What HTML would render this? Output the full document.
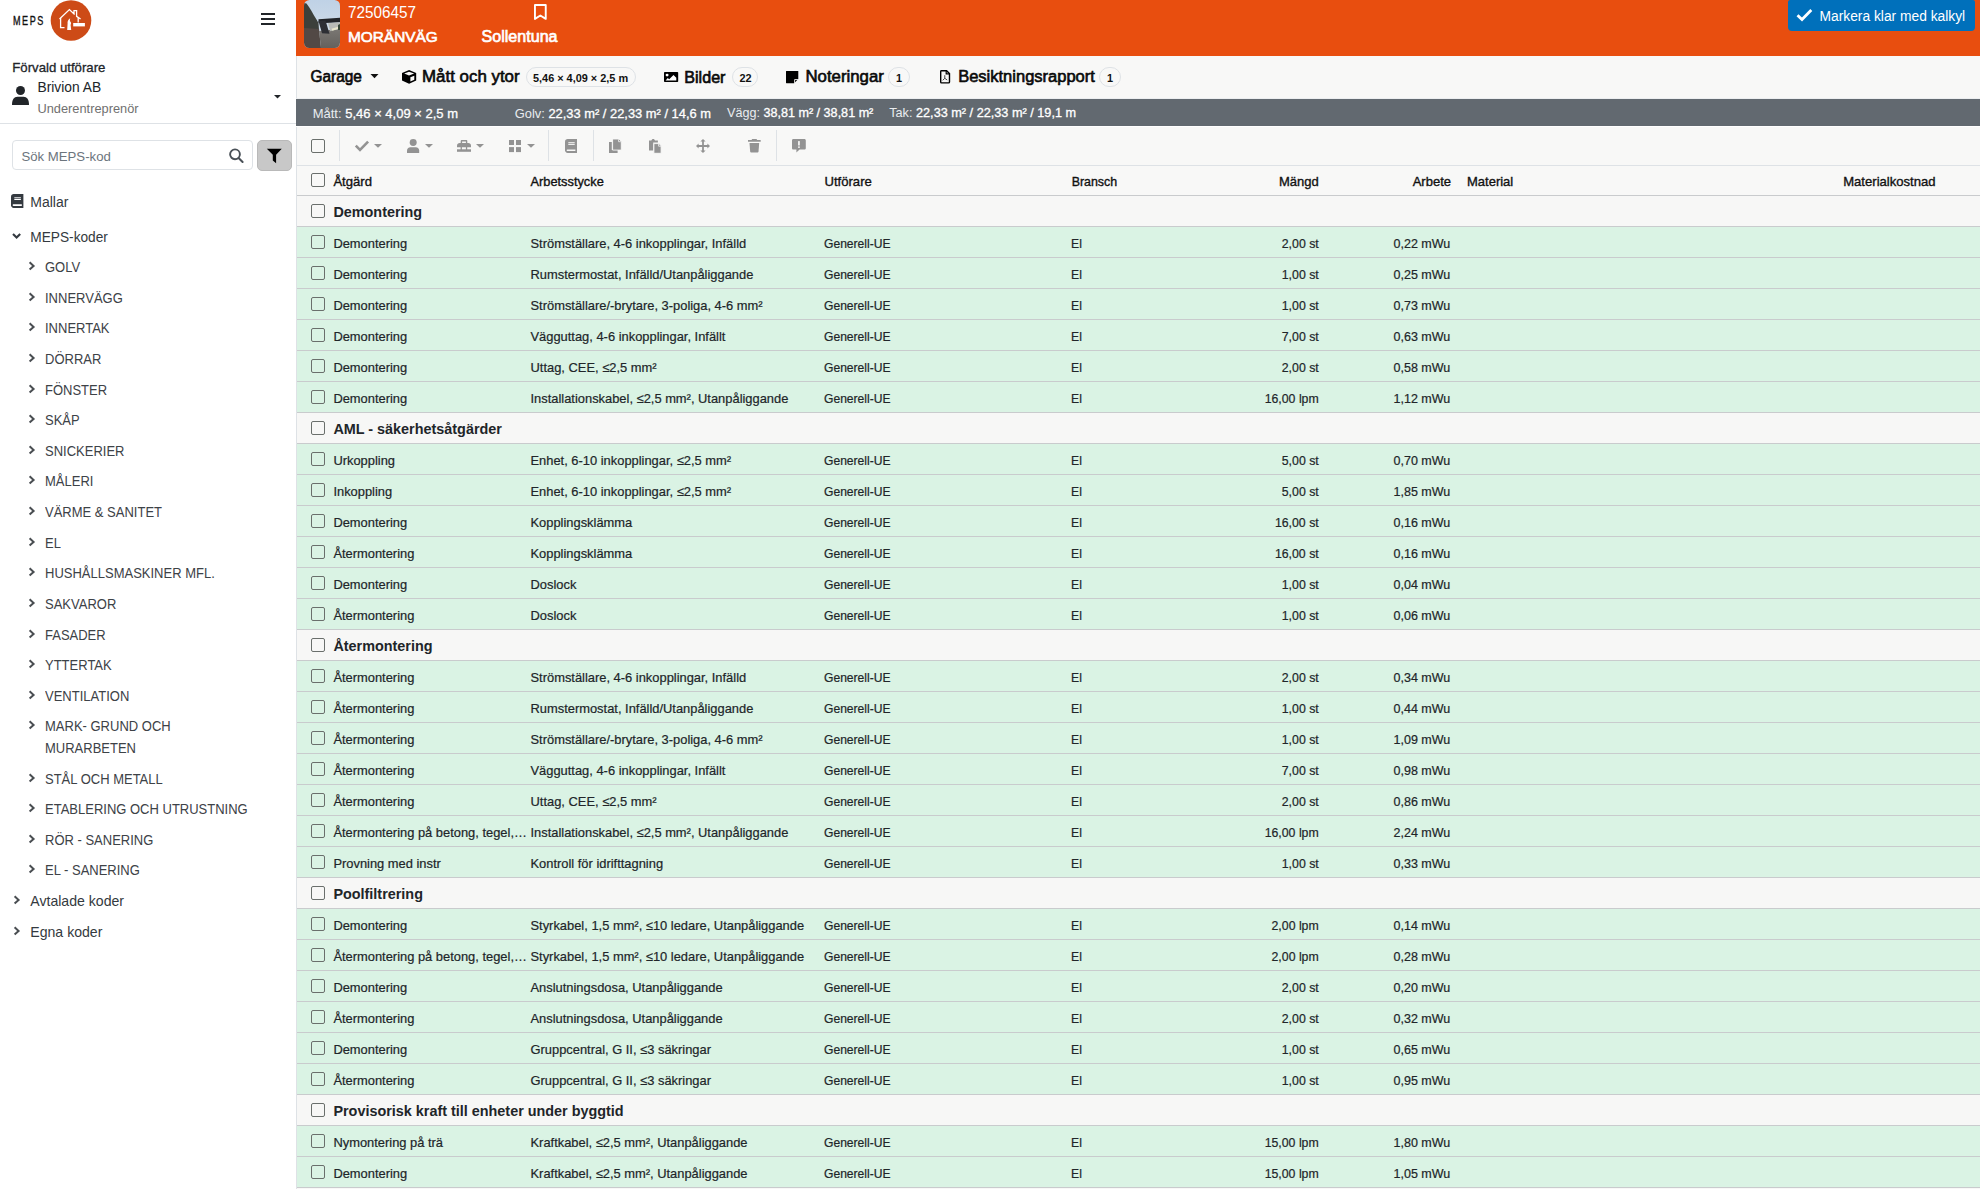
<!DOCTYPE html>
<html><head><meta charset="utf-8"><title>MEPS</title>
<style>
html,body{margin:0;padding:0;}
body{width:1980px;height:1189px;overflow:hidden;position:relative;background:#fff;font-family:"Liberation Sans", sans-serif;}
.t{position:absolute;white-space:nowrap;}
.r{position:absolute;}
svg.r{overflow:visible;}
</style></head><body>
<div class="r" style="left:0px;top:0px;width:296px;height:1189px;background:#fff;"></div>
<div class="t " style="left:12.90px;top:12.83px;font-size:12.6px;line-height:16px;color:#111;letter-spacing:2.1px;-webkit-text-stroke:0.35px #111;transform:scaleX(0.72);transform-origin:0 0;">MEPS</div>
<svg class="r" style="left:50px;top:0px;" width="42" height="42" viewBox="0 0 42 42"><circle cx="21" cy="20.5" r="20.3" fill="#CD4B17"/>
<path d="M9.5 19 L19.4 9.6 L24.6 14.4 M24 13.8 V10.6 H26.6 V16.3 L30.6 19" fill="none" stroke="#fff" stroke-width="1.3"/>
<path d="M10.6 18 V27.6 H14.5" fill="none" stroke="#fff" stroke-width="1.3"/>
<path d="M28.2 17.5 V22.6" fill="none" stroke="#fff" stroke-width="1.3"/>
<path d="M17.2 30 L17.6 23.5 C17.2 21.5 18.3 19.3 20.2 18.2 C19.6 20 19.8 21.2 20.6 22 L21.1 23 L20.6 25 L21.2 30 Z" fill="#fff"/>
<rect x="23.2" y="23" width="11.7" height="3.4" fill="#fff"/></svg>
<div class="r" style="left:261px;top:13px;width:14px;height:2px;background:#212529;"></div>
<div class="r" style="left:261px;top:18.3px;width:14px;height:2px;background:#212529;"></div>
<div class="r" style="left:261px;top:23px;width:14px;height:2px;background:#212529;"></div>
<div class="t " style="left:12.30px;top:58.72px;font-size:13.2px;line-height:17px;color:#212529;-webkit-text-stroke:0.3px #212529;">Förvald utförare</div>
<svg class="r" style="left:12px;top:85px;" width="17" height="21" viewBox="0 0 17 21"><circle cx="8.5" cy="5.5" r="4.5" fill="#212529"/><path d="M0 20 C0 14.5 2 11.8 5.5 11.8 H11.5 C15 11.8 17 14.5 17 20 Z" fill="#212529"/></svg>
<div class="t " style="left:37.50px;top:78.81px;font-size:13.8px;line-height:18px;color:#212529;">Brivion AB</div>
<div class="t " style="left:37.50px;top:100.06px;font-size:12.8px;line-height:17px;color:#707070;">Underentreprenör</div>
<svg class="r" style="left:274px;top:94.7px;" width="7" height="4" viewBox="0 0 7 4"><path d="M0 0 H7 L3.5 3.5 Z" fill="#212529"/></svg>
<div class="r" style="left:0px;top:123px;width:296px;height:1px;background:#dee2e6;"></div>
<div class="r" style="left:12px;top:140px;width:241px;height:30px;background:#fff;border:1px solid #dee2e6;border-radius:4px;box-sizing:border-box;"></div>
<div class="t " style="left:21.40px;top:148.12px;font-size:13.2px;line-height:17px;color:#6c757d;">Sök MEPS-kod</div>
<svg class="r" style="left:228px;top:147px;" width="17" height="17" viewBox="0 0 17 17"><circle cx="7" cy="7.3" r="4.9" fill="none" stroke="#495057" stroke-width="1.9"/><path d="M10.6 10.9 L14.6 14.9" stroke="#495057" stroke-width="2.1" stroke-linecap="round"/></svg>
<div class="r" style="left:257px;top:140px;width:35px;height:31px;background:#c8c8c8;border:1px solid #b9b9b9;border-radius:5px;box-sizing:border-box;"></div>
<svg class="r" style="left:266px;top:148px;" width="17" height="16" viewBox="0 0 17 16"><path d="M0.8 0.7 H15.8 L10.1 6.8 V15.2 L6.8 12.6 V6.8 Z" fill="#000"/></svg>
<svg class="r" style="left:10.8px;top:194px;" width="12.4" height="13.9" viewBox="0 0 12.4 13.9"><path d="M2.6 0 H12.4 V13.9 H2.6 C1.2 13.9 0 12.7 0 11.3 V2.6 C0 1.2 1.2 0 2.6 0 Z" fill="#343a40"/><rect x="3.3" y="3.3" width="6.6" height="1" fill="#fff"/><rect x="3.3" y="5" width="6.6" height="1" fill="#fff"/><path d="M2.4 10.2 H10.8 V12 H2.4 C1.9 12 1.7 11.8 1.7 11.1 C1.7 10.4 1.9 10.2 2.4 10.2 Z" fill="#fff"/></svg>
<div class="t " style="left:30.30px;top:193.14px;font-size:14px;line-height:18px;color:#343a40;">Mallar</div>
<svg class="r" style="left:12px;top:233px;" width="10" height="7" viewBox="0 0 10 7"><path d="M1 1 L4.6 4.6 L8.2 1" fill="none" stroke="#343a40" stroke-width="2.1"/></svg>
<div class="t " style="left:30.30px;top:228.55px;font-size:13.7px;line-height:18px;color:#343a40;transform:scaleY(1.06);transform-origin:0 13.75px;">MEPS-koder</div>
<svg class="r" style="left:28px;top:261px;" width="8" height="10" viewBox="0 0 8 10"><path d="M1.6 1.2 L5.6 4.9 L1.6 8.6" fill="none" stroke="#4a4e52" stroke-width="2"/></svg>
<div class="t " style="left:45.00px;top:258.59px;font-size:13px;line-height:17px;color:#3d4247;transform:scaleY(1.1);transform-origin:0 13.01px;">GOLV</div>
<svg class="r" style="left:28px;top:292px;" width="8" height="10" viewBox="0 0 8 10"><path d="M1.6 1.2 L5.6 4.9 L1.6 8.6" fill="none" stroke="#4a4e52" stroke-width="2"/></svg>
<div class="t " style="left:45.00px;top:289.59px;font-size:13px;line-height:17px;color:#3d4247;transform:scaleY(1.1);transform-origin:0 13.01px;">INNERVÄGG</div>
<svg class="r" style="left:28px;top:322px;" width="8" height="10" viewBox="0 0 8 10"><path d="M1.6 1.2 L5.6 4.9 L1.6 8.6" fill="none" stroke="#4a4e52" stroke-width="2"/></svg>
<div class="t " style="left:45.00px;top:319.59px;font-size:13px;line-height:17px;color:#3d4247;transform:scaleY(1.1);transform-origin:0 13.01px;">INNERTAK</div>
<svg class="r" style="left:28px;top:353px;" width="8" height="10" viewBox="0 0 8 10"><path d="M1.6 1.2 L5.6 4.9 L1.6 8.6" fill="none" stroke="#4a4e52" stroke-width="2"/></svg>
<div class="t " style="left:45.00px;top:350.59px;font-size:13px;line-height:17px;color:#3d4247;transform:scaleY(1.1);transform-origin:0 13.01px;">DÖRRAR</div>
<svg class="r" style="left:28px;top:384px;" width="8" height="10" viewBox="0 0 8 10"><path d="M1.6 1.2 L5.6 4.9 L1.6 8.6" fill="none" stroke="#4a4e52" stroke-width="2"/></svg>
<div class="t " style="left:45.00px;top:381.59px;font-size:13px;line-height:17px;color:#3d4247;transform:scaleY(1.1);transform-origin:0 13.01px;">FÖNSTER</div>
<svg class="r" style="left:28px;top:414px;" width="8" height="10" viewBox="0 0 8 10"><path d="M1.6 1.2 L5.6 4.9 L1.6 8.6" fill="none" stroke="#4a4e52" stroke-width="2"/></svg>
<div class="t " style="left:45.00px;top:411.59px;font-size:13px;line-height:17px;color:#3d4247;transform:scaleY(1.1);transform-origin:0 13.01px;">SKÅP</div>
<svg class="r" style="left:28px;top:445px;" width="8" height="10" viewBox="0 0 8 10"><path d="M1.6 1.2 L5.6 4.9 L1.6 8.6" fill="none" stroke="#4a4e52" stroke-width="2"/></svg>
<div class="t " style="left:45.00px;top:442.59px;font-size:13px;line-height:17px;color:#3d4247;transform:scaleY(1.1);transform-origin:0 13.01px;">SNICKERIER</div>
<svg class="r" style="left:28px;top:475px;" width="8" height="10" viewBox="0 0 8 10"><path d="M1.6 1.2 L5.6 4.9 L1.6 8.6" fill="none" stroke="#4a4e52" stroke-width="2"/></svg>
<div class="t " style="left:45.00px;top:472.59px;font-size:13px;line-height:17px;color:#3d4247;transform:scaleY(1.1);transform-origin:0 13.01px;">MÅLERI</div>
<svg class="r" style="left:28px;top:506px;" width="8" height="10" viewBox="0 0 8 10"><path d="M1.6 1.2 L5.6 4.9 L1.6 8.6" fill="none" stroke="#4a4e52" stroke-width="2"/></svg>
<div class="t " style="left:45.00px;top:503.59px;font-size:13px;line-height:17px;color:#3d4247;transform:scaleY(1.1);transform-origin:0 13.01px;">VÄRME &amp; SANITET</div>
<svg class="r" style="left:28px;top:537px;" width="8" height="10" viewBox="0 0 8 10"><path d="M1.6 1.2 L5.6 4.9 L1.6 8.6" fill="none" stroke="#4a4e52" stroke-width="2"/></svg>
<div class="t " style="left:45.00px;top:534.59px;font-size:13px;line-height:17px;color:#3d4247;transform:scaleY(1.1);transform-origin:0 13.01px;">EL</div>
<svg class="r" style="left:28px;top:567px;" width="8" height="10" viewBox="0 0 8 10"><path d="M1.6 1.2 L5.6 4.9 L1.6 8.6" fill="none" stroke="#4a4e52" stroke-width="2"/></svg>
<div class="t " style="left:45.00px;top:564.59px;font-size:13px;line-height:17px;color:#3d4247;transform:scaleY(1.1);transform-origin:0 13.01px;">HUSHÅLLSMASKINER MFL.</div>
<svg class="r" style="left:28px;top:598px;" width="8" height="10" viewBox="0 0 8 10"><path d="M1.6 1.2 L5.6 4.9 L1.6 8.6" fill="none" stroke="#4a4e52" stroke-width="2"/></svg>
<div class="t " style="left:45.00px;top:595.59px;font-size:13px;line-height:17px;color:#3d4247;transform:scaleY(1.1);transform-origin:0 13.01px;">SAKVAROR</div>
<svg class="r" style="left:28px;top:629px;" width="8" height="10" viewBox="0 0 8 10"><path d="M1.6 1.2 L5.6 4.9 L1.6 8.6" fill="none" stroke="#4a4e52" stroke-width="2"/></svg>
<div class="t " style="left:45.00px;top:626.59px;font-size:13px;line-height:17px;color:#3d4247;transform:scaleY(1.1);transform-origin:0 13.01px;">FASADER</div>
<svg class="r" style="left:28px;top:659px;" width="8" height="10" viewBox="0 0 8 10"><path d="M1.6 1.2 L5.6 4.9 L1.6 8.6" fill="none" stroke="#4a4e52" stroke-width="2"/></svg>
<div class="t " style="left:45.00px;top:656.59px;font-size:13px;line-height:17px;color:#3d4247;transform:scaleY(1.1);transform-origin:0 13.01px;">YTTERTAK</div>
<svg class="r" style="left:28px;top:690px;" width="8" height="10" viewBox="0 0 8 10"><path d="M1.6 1.2 L5.6 4.9 L1.6 8.6" fill="none" stroke="#4a4e52" stroke-width="2"/></svg>
<div class="t " style="left:45.00px;top:687.59px;font-size:13px;line-height:17px;color:#3d4247;transform:scaleY(1.1);transform-origin:0 13.01px;">VENTILATION</div>
<svg class="r" style="left:28px;top:720px;" width="8" height="10" viewBox="0 0 8 10"><path d="M1.6 1.2 L5.6 4.9 L1.6 8.6" fill="none" stroke="#4a4e52" stroke-width="2"/></svg>
<div class="t " style="left:45.00px;top:717.59px;font-size:13px;line-height:17px;color:#3d4247;transform:scaleY(1.1);transform-origin:0 13.01px;">MARK- GRUND OCH</div>
<div class="t " style="left:45.00px;top:739.59px;font-size:13px;line-height:17px;color:#3d4247;transform:scaleY(1.1);transform-origin:0 13.01px;">MURARBETEN</div>
<svg class="r" style="left:28px;top:773px;" width="8" height="10" viewBox="0 0 8 10"><path d="M1.6 1.2 L5.6 4.9 L1.6 8.6" fill="none" stroke="#4a4e52" stroke-width="2"/></svg>
<div class="t " style="left:45.00px;top:770.59px;font-size:13px;line-height:17px;color:#3d4247;transform:scaleY(1.1);transform-origin:0 13.01px;">STÅL OCH METALL</div>
<svg class="r" style="left:28px;top:803px;" width="8" height="10" viewBox="0 0 8 10"><path d="M1.6 1.2 L5.6 4.9 L1.6 8.6" fill="none" stroke="#4a4e52" stroke-width="2"/></svg>
<div class="t " style="left:45.00px;top:800.59px;font-size:13px;line-height:17px;color:#3d4247;transform:scaleY(1.1);transform-origin:0 13.01px;">ETABLERING OCH UTRUSTNING</div>
<svg class="r" style="left:28px;top:834px;" width="8" height="10" viewBox="0 0 8 10"><path d="M1.6 1.2 L5.6 4.9 L1.6 8.6" fill="none" stroke="#4a4e52" stroke-width="2"/></svg>
<div class="t " style="left:45.00px;top:831.59px;font-size:13px;line-height:17px;color:#3d4247;transform:scaleY(1.1);transform-origin:0 13.01px;">RÖR - SANERING</div>
<svg class="r" style="left:28px;top:864px;" width="8" height="10" viewBox="0 0 8 10"><path d="M1.6 1.2 L5.6 4.9 L1.6 8.6" fill="none" stroke="#4a4e52" stroke-width="2"/></svg>
<div class="t " style="left:45.00px;top:861.59px;font-size:13px;line-height:17px;color:#3d4247;transform:scaleY(1.1);transform-origin:0 13.01px;">EL - SANERING</div>
<svg class="r" style="left:13px;top:895px;" width="8" height="10" viewBox="0 0 8 10"><path d="M1.6 1.2 L5.6 4.9 L1.6 8.6" fill="none" stroke="#4a4e52" stroke-width="2"/></svg>
<div class="t " style="left:30.30px;top:891.71px;font-size:14.1px;line-height:18px;color:#343a40;">Avtalade koder</div>
<svg class="r" style="left:13px;top:926px;" width="8" height="10" viewBox="0 0 8 10"><path d="M1.6 1.2 L5.6 4.9 L1.6 8.6" fill="none" stroke="#4a4e52" stroke-width="2"/></svg>
<div class="t " style="left:30.30px;top:922.71px;font-size:14.1px;line-height:18px;color:#343a40;">Egna koder</div>
<div class="r" style="left:296px;top:0px;width:1684px;height:1189px;background:#f8f8f7;"></div>
<div class="r" style="left:296px;top:0px;width:1px;height:1189px;background:#dee2e6;"></div>
<div class="r" style="left:296px;top:0px;width:1684px;height:56px;background:#E84E0F;"></div>
<svg class="r" style="left:304px;top:0px;" width="36" height="48" viewBox="0 0 36 48"><defs><clipPath id="thc"><rect x="0" y="0" width="36" height="48" rx="5.5" ry="5.5"/></clipPath>
<linearGradient id="sky" x1="0" y1="0" x2="0" y2="1"><stop offset="0" stop-color="#bfd2e6"/><stop offset="0.5" stop-color="#cbd9e7"/><stop offset="1" stop-color="#d8e0e6"/></linearGradient>
<linearGradient id="gr" x1="0" y1="0" x2="0" y2="1"><stop offset="0" stop-color="#7a7773"/><stop offset="1" stop-color="#64615d"/></linearGradient></defs>
<g clip-path="url(#thc)">
<rect width="36" height="48" fill="url(#sky)"/>
<path d="M0 3 L2.5 3.5 L5 7 L7.5 11 L10 15.5 L12.5 19.5 L14.5 23 L15 30 L0 30 Z" fill="#3c403b"/>
<path d="M0 28 L15 29 L17 48 L0 48 Z" fill="#524945"/>
<path d="M15 31 L36 29 L36 48 L17 48 Z" fill="url(#gr)"/>
<path d="M14.5 19.3 L36 17.8 L36 22.3 L21 23 L14.5 23 Z" fill="#232529"/>
<path d="M14.5 21 L21.5 20.5 L25.5 33.8 L18 33.3 Z" fill="#2d2f34"/>
<path d="M24 23.2 L36 22.3 L36 28.3 L26.3 31.2 Z" fill="#b9bbb6"/>
<path d="M27.5 28.8 L35 26.4 L36 28.4 L28.3 30.8 Z" fill="#e8e6cc"/>
<path d="M34 25 L36 24 L36 30 L34 30 Z" fill="#3a4a3a"/>
</g></svg>
<div class="t " style="left:348.00px;top:2.89px;font-size:15.3px;line-height:20px;color:#fff;transform:scaleY(1.05);transform-origin:0 15.31px;">72506457</div>
<div class="t " style="left:348.00px;top:26.96px;font-size:15.4px;line-height:20px;color:#fff;-webkit-text-stroke:0.65px #fff;">MORÄNVÄG</div>
<svg class="r" style="left:534.1px;top:3.9px;" width="12.7" height="16" viewBox="0 0 12.7 16"><path d="M0.95 0.95 H11.75 V14.9 L6.35 11.5 L0.95 14.9 Z" fill="none" stroke="#fff" stroke-width="1.9" stroke-linejoin="round"/></svg>
<div class="t " style="left:481.50px;top:26.21px;font-size:16.1px;line-height:21px;color:#fff;-webkit-text-stroke:0.65px #fff;transform:scaleY(0.97);transform-origin:0 16.09px;">Sollentuna</div>
<div class="r" style="left:1788px;top:0px;width:187px;height:31px;background:#0070BB;border-radius:2px 2px 4px 4px;"></div>
<svg class="r" style="left:1796px;top:8px;" width="17" height="14" viewBox="0 0 17 14"><path d="M1.5 7.2 L6 11.5 L15.3 2" fill="none" stroke="#fff" stroke-width="2.8"/></svg>
<div class="t " style="left:1819.50px;top:7.71px;font-size:13.8px;line-height:18px;color:#fff;">Markera klar med kalkyl</div>
<div class="t " style="left:310.50px;top:67.36px;font-size:15.4px;line-height:20px;color:#111;-webkit-text-stroke:0.6px #000;transform:scaleY(1.03);transform-origin:0 15.34px;">Garage</div>
<svg class="r" style="left:369px;top:73px;" width="11" height="7" viewBox="0 0 11 7"><path d="M1.5 1 H9.5 L5.5 5.3 Z" fill="#111"/></svg>
<svg class="r" style="left:401.7px;top:69.9px;" width="14.2" height="13.8" viewBox="0 0 14.2 13.8"><path d="M7.1 0 L14.2 3 V10.6 L7.1 13.8 L0 10.6 V3 Z" fill="#000"/><path d="M2.2 3.4 L7 1.8 L12.2 3.4 L7 5.6 Z" fill="#f8f8f7"/><path d="M8.4 7.3 L12.3 5.8 V9.8 L8.4 11.4 Z" fill="#f8f8f7"/></svg>
<div class="t " style="left:422.00px;top:65.84px;font-size:16.9px;line-height:22px;color:#111;-webkit-text-stroke:0.6px #000;transform:scaleY(0.95);transform-origin:0 16.86px;">Mått och ytor</div>
<div class="r" style="left:526px;top:67px;width:110px;height:20px;background:#f8f8f7;border:1px solid #dee2e6;border-radius:10px;box-sizing:border-box;"></div>
<div class="t " style="left:533.00px;top:70.72px;font-size:10.9px;line-height:14px;color:#111;font-weight:700;">5,46 × 4,09 × 2,5 m</div>
<svg class="r" style="left:663.7px;top:71.9px;" width="14.2" height="10" viewBox="0 0 14.2 10"><rect x="0" y="0" width="14.2" height="10" rx="0.8" fill="#000"/><circle cx="3.1" cy="3.1" r="1.45" fill="#fff"/><path d="M1.6 8.4 L3.8 5.9 L5.2 7.3 L9.5 3 L12.3 5.7 V8.4 Z" fill="#fff"/></svg>
<div class="t " style="left:684.30px;top:66.61px;font-size:16.1px;line-height:21px;color:#111;-webkit-text-stroke:0.6px #000;transform:scaleY(0.99);transform-origin:0 16.09px;">Bilder</div>
<div class="r" style="left:732px;top:67px;width:26px;height:20px;background:#f8f8f7;border:1px solid #dee2e6;border-radius:10px;box-sizing:border-box;"></div>
<div class="t " style="left:739.50px;top:70.72px;font-size:10.9px;line-height:14px;color:#111;font-weight:700;">22</div>
<svg class="r" style="left:785.9px;top:70.8px;" width="12.3" height="12.2" viewBox="0 0 12.3 12.2"><path d="M0.4 0 H11.9 C12.1 0 12.3 .2 12.3 .4 V8 L8.1 12.2 H0.4 C.2 12.2 0 12 0 11.8 V.4 C0 .2 .2 0 .4 0 Z" fill="#000"/><path d="M8.6 12 V8.6 H12" fill="none" stroke="#f8f8f7" stroke-width="0.9"/></svg>
<div class="t " style="left:805.50px;top:65.87px;font-size:16.8px;line-height:22px;color:#111;-webkit-text-stroke:0.6px #000;transform:scaleY(0.95);transform-origin:0 16.83px;">Noteringar</div>
<div class="r" style="left:888px;top:67px;width:22px;height:20px;background:#f8f8f7;border:1px solid #dee2e6;border-radius:10px;box-sizing:border-box;"></div>
<div class="t " style="left:896.00px;top:70.72px;font-size:10.9px;line-height:14px;color:#111;font-weight:700;">1</div>
<svg class="r" style="left:939.9px;top:70.1px;" width="10.2" height="13.6" viewBox="0 0 10.2 13.6"><path d="M1.5 0.7 H6.6 L9.5 3.6 V11.9 C9.5 12.5 9.1 12.9 8.5 12.9 H1.5 C.9 12.9 .7 12.5 .7 11.9 V1.5 C.7 .9 .9 .7 1.5 .7 Z" fill="none" stroke="#000" stroke-width="1.4"/><path d="M6.2 .8 V3.9 H9.4" fill="none" stroke="#000" stroke-width="1.2"/><path d="M4.8 5.2 V8.3 L2.7 10.3 M4.8 8.3 L7.2 10" fill="none" stroke="#000" stroke-width="0.7"/></svg>
<div class="t " style="left:958.20px;top:66.47px;font-size:16.5px;line-height:21px;color:#111;-webkit-text-stroke:0.6px #000;transform:scaleY(0.97);transform-origin:0 16.23px;">Besiktningsrapport</div>
<div class="r" style="left:1099px;top:67px;width:22px;height:20px;background:#f8f8f7;border:1px solid #dee2e6;border-radius:10px;box-sizing:border-box;"></div>
<div class="t " style="left:1107.00px;top:70.72px;font-size:10.9px;line-height:14px;color:#111;font-weight:700;">1</div>
<div class="r" style="left:296px;top:98px;width:1684px;height:1px;background:#eceef0;"></div>
<div class="r" style="left:296px;top:99px;width:1684px;height:27px;background:#626970;"></div>
<div class="r" style="left:296px;top:126px;width:1684px;height:1px;background:#fff;"></div>
<div class="t" style="left:312.7px;top:104.90px;font-size:13px;line-height:17px;color:#fff;"><span style="color:#e9ecef">Mått:</span> <span style="-webkit-text-stroke:0.3px #fff">5,46 × 4,09 × 2,5 m</span></div>
<div class="t" style="left:514.7px;top:104.90px;font-size:12.9px;line-height:17px;color:#fff;"><span style="color:#e9ecef">Golv:</span> <span style="-webkit-text-stroke:0.3px #fff">22,33 m² / 22,33 m² / 14,6 m</span></div>
<div class="t" style="left:727px;top:105.40px;font-size:12.6px;line-height:16px;color:#fff;"><span style="color:#e9ecef">Vägg:</span> <span style="-webkit-text-stroke:0.3px #fff">38,81 m² / 38,81 m²</span></div>
<div class="t" style="left:889.2px;top:104.90px;font-size:12.7px;line-height:17px;color:#fff;"><span style="color:#e9ecef">Tak:</span> <span style="-webkit-text-stroke:0.3px #fff">22,33 m² / 22,33 m² / 19,1 m</span></div>
<div class="r" style="left:297px;top:165px;width:1683px;height:1px;background:#dee2e6;"></div>
<div class="r" style="left:311px;top:139px;width:14px;height:14px;box-sizing:border-box;border:1.5px solid #6a6f6c;border-radius:2px;"></div>
<div class="r" style="left:339px;top:130px;width:1px;height:31px;background:#dee2e6;"></div>
<div class="r" style="left:548px;top:130px;width:1px;height:31px;background:#dee2e6;"></div>
<div class="r" style="left:593px;top:130px;width:1px;height:31px;background:#dee2e6;"></div>
<div class="r" style="left:776px;top:130px;width:1px;height:31px;background:#dee2e6;"></div>
<svg class="r" style="left:354px;top:140px;" width="16" height="12" viewBox="0 0 16 12"><path d="M1.8 5.6 L6 9.8 L14.1 1.6" fill="none" stroke="#939393" stroke-width="2.6"/></svg>
<svg class="r" style="left:374px;top:144px;" width="8" height="4" viewBox="0 0 8 4"><path d="M0 0 H8 L4 3.8 Z" fill="#939393"/></svg>
<svg class="r" style="left:406.8px;top:138.8px;" width="12.2" height="14.1" viewBox="0 0 12.2 14.1"><circle cx="6.2" cy="3.6" r="3.5" fill="#939393"/><path d="M0 14.1 V11.6 C0 9.6 1.4 8.2 3.4 8.2 H8.8 C10.8 8.2 12.2 9.6 12.2 11.6 V14.1 Z" fill="#939393"/></svg>
<svg class="r" style="left:425px;top:144px;" width="8" height="4" viewBox="0 0 8 4"><path d="M0 0 H8 L4 3.8 Z" fill="#939393"/></svg>
<svg class="r" style="left:457px;top:139.9px;" width="14" height="11.8" viewBox="0 0 14 11.8"><path d="M3.7 3.5 V0.9 C3.7 .4 4.1 0 4.6 0 H9.5 C10 0 10.3 .4 10.3 .9 V3.5 H8.9 V1.6 H5.1 V3.5 Z" fill="#939393"/><path d="M0 5.6 C0 4 1.2 3 2.7 3 H11.3 C12.8 3 14 4 14 5.6 V7.3 H0 Z" fill="#939393"/><path d="M0 9.3 H14 V11.8 H0 Z" fill="#939393"/><rect x="3.6" y="6.6" width="1.3" height="3.4" fill="#939393"/><rect x="8.9" y="6.6" width="1.3" height="3.4" fill="#939393"/></svg>
<svg class="r" style="left:476px;top:144px;" width="8" height="4" viewBox="0 0 8 4"><path d="M0 0 H8 L4 3.8 Z" fill="#939393"/></svg>
<svg class="r" style="left:508.9px;top:139.9px;" width="12" height="12.1" viewBox="0 0 12 12.1"><rect x="0" y="0" width="5" height="5" fill="#939393"/><rect x="7" y="0" width="5" height="5" fill="#939393"/><rect x="0" y="7.1" width="5" height="5" fill="#939393"/><rect x="7" y="7.1" width="5" height="5" fill="#939393"/></svg>
<svg class="r" style="left:527px;top:144px;" width="8" height="4" viewBox="0 0 8 4"><path d="M0 0 H8 L4 3.8 Z" fill="#939393"/></svg>
<svg class="r" style="left:565px;top:139px;" width="12" height="13.9" viewBox="0 0 12 13.9"><path d="M2.6 0 H12 V13.9 H2.6 C1.2 13.9 0 12.7 0 11.3 V2.6 C0 1.2 1.2 0 2.6 0 Z" fill="#939393"/><rect x="3.3" y="3.2" width="6.4" height="1" fill="#f8f8f7"/><rect x="3.3" y="4.9" width="6.4" height="1" fill="#f8f8f7"/><path d="M2.4 10.5 H10.4 V12.1 H2.4 C1.9 12.1 1.7 11.9 1.7 11.3 C1.7 10.7 1.9 10.5 2.4 10.5 Z" fill="#f8f8f7"/></svg>
<svg class="r" style="left:609.4px;top:139px;" width="12.3" height="13.9" viewBox="0 0 12.3 13.9"><path d="M0 3 H2.8 V11 H8.6 V13.9 H0 Z" fill="#939393"/><path d="M3.6 0 H10 L12.3 2.3 V11.1 H3.6 Z" fill="#939393" stroke="#f8f8f7" stroke-width="0.9"/><path d="M9.6 0.3 V2.7 H12" fill="none" stroke="#f8f8f7" stroke-width="0.8"/></svg>
<svg class="r" style="left:648.9px;top:138.6px;" width="12.1" height="14.3" viewBox="0 0 12.1 14.3"><path d="M0 1.5 H2.4 C2.6 .6 3.3 0 4.2 0 C5.1 0 5.8 .6 6 1.5 H8.9 V3.6 H4.2 V11.5 H0 Z" fill="#939393"/><path d="M4.9 4.6 H10 L12.1 6.7 V14.3 H4.9 Z" fill="#939393" stroke="#f8f8f7" stroke-width="0.9"/><path d="M9.6 4.8 V7.2 H12" fill="none" stroke="#f8f8f7" stroke-width="0.8"/></svg>
<svg class="r" style="left:695.5px;top:138.8px;" width="14" height="14" viewBox="0 0 14 14"><path d="M7 0 L9.6 2.6 H7.9 V6.1 H11.4 V4.4 L14 7 L11.4 9.6 V7.9 H7.9 V11.4 H9.6 L7 14 L4.4 11.4 H6.1 V7.9 H2.6 V9.6 L0 7 L2.6 4.4 V6.1 H6.1 V2.6 H4.4 Z" fill="#939393"/></svg>
<svg class="r" style="left:748.2px;top:139.2px;" width="12.7" height="13.6" viewBox="0 0 12.7 13.6"><path d="M4.2 0 H8.5 L9.2 1.1 H12.7 V2.7 H0 V1.1 H3.5 Z" fill="#939393"/><path d="M1.5 3.9 H11.2 L10.5 12.8 C10.4 13.3 10.1 13.6 9.6 13.6 H3.1 C2.6 13.6 2.3 13.3 2.2 12.8 Z" fill="#939393"/></svg>
<svg class="r" style="left:792px;top:139.2px;" width="13.8" height="13.6" viewBox="0 0 13.8 13.6"><path d="M1.4 0 H12.4 C13.2 0 13.8 .6 13.8 1.4 V9.2 C13.8 10 13.2 10.6 12.4 10.6 H7.6 L4.4 13.6 V10.6 H1.4 C.6 10.6 0 10 0 9.2 V1.4 C0 .6 .6 0 1.4 0 Z" fill="#939393"/><rect x="6.1" y="2.1" width="1.7" height="4.4" fill="#f8f8f7"/><rect x="6.1" y="7.4" width="1.7" height="1.5" fill="#f8f8f7"/></svg>
<div class="r" style="left:311px;top:173px;width:14px;height:14px;box-sizing:border-box;border:1.5px solid #6a6f6c;border-radius:2px;"></div>
<div class="t " style="left:333.40px;top:172.95px;font-size:13.1px;line-height:17px;color:#111;-webkit-text-stroke:0.35px #111;">Åtgärd</div>
<div class="t " style="left:530.50px;top:173.06px;font-size:12.8px;line-height:17px;color:#111;-webkit-text-stroke:0.35px #111;">Arbetsstycke</div>
<div class="t " style="left:824.50px;top:172.95px;font-size:13.1px;line-height:17px;color:#111;-webkit-text-stroke:0.35px #111;">Utförare</div>
<div class="t " style="left:1071.70px;top:173.70px;font-size:12.4px;line-height:16px;color:#111;-webkit-text-stroke:0.35px #111;">Bransch</div>
<div class="t " style="right:661.30px;text-align:right;top:172.99px;font-size:13px;line-height:17px;color:#111;-webkit-text-stroke:0.35px #111;">Mängd</div>
<div class="t " style="right:529.00px;text-align:right;top:172.99px;font-size:13px;line-height:17px;color:#111;-webkit-text-stroke:0.35px #111;">Arbete</div>
<div class="t " style="left:1467.00px;top:172.99px;font-size:13px;line-height:17px;color:#111;-webkit-text-stroke:0.35px #111;">Material</div>
<div class="t " style="right:44.40px;text-align:right;top:172.95px;font-size:13.1px;line-height:17px;color:#111;-webkit-text-stroke:0.35px #111;">Materialkostnad</div>
<div class="r" style="left:297px;top:195px;width:1683px;height:1px;background:#c9cbcd;"></div>
<div class="r" style="left:297px;top:196px;width:1683px;height:30px;background:#f7f7f6;"></div>
<div class="r" style="left:297px;top:226px;width:1683px;height:1px;background:#c9cbcd;"></div>
<div class="r" style="left:311px;top:204px;width:14px;height:14px;box-sizing:border-box;border:1.5px solid #6a6f6c;border-radius:2px;"></div>
<div class="t " style="left:333.40px;top:202.50px;font-size:14.4px;line-height:19px;color:#212529;font-weight:700;">Demontering</div>
<div class="r" style="left:297px;top:227px;width:1683px;height:30px;background:#daf3e4;"></div>
<div class="r" style="left:297px;top:257px;width:1683px;height:1px;background:#c9cbcd;"></div>
<div class="r" style="left:311px;top:235px;width:14px;height:14px;box-sizing:border-box;border:1.5px solid #6a6f6c;border-radius:2px;"></div>
<div class="t " style="left:333.40px;top:235.02px;font-size:12.9px;line-height:17px;color:#212529;-webkit-text-stroke:0.2px #212529;">Demontering</div>
<div class="t " style="left:530.50px;top:235.02px;font-size:12.9px;line-height:17px;color:#212529;-webkit-text-stroke:0.2px #212529;">Strömställare, 4-6 inkopplingar, Infälld</div>
<div class="t " style="left:824.00px;top:235.80px;font-size:12.1px;line-height:16px;color:#212529;-webkit-text-stroke:0.2px #212529;">Generell-UE</div>
<div class="t " style="left:1071.00px;top:235.77px;font-size:12.2px;line-height:16px;color:#212529;-webkit-text-stroke:0.2px #212529;">El</div>
<div class="t " style="right:661.30px;text-align:right;top:235.73px;font-size:12.3px;line-height:16px;color:#212529;-webkit-text-stroke:0.2px #212529;">2,00 st</div>
<div class="t " style="right:529.70px;text-align:right;top:235.66px;font-size:12.5px;line-height:16px;color:#212529;-webkit-text-stroke:0.2px #212529;">0,22 mWu</div>
<div class="r" style="left:297px;top:258px;width:1683px;height:30px;background:#daf3e4;"></div>
<div class="r" style="left:297px;top:288px;width:1683px;height:1px;background:#c9cbcd;"></div>
<div class="r" style="left:311px;top:266px;width:14px;height:14px;box-sizing:border-box;border:1.5px solid #6a6f6c;border-radius:2px;"></div>
<div class="t " style="left:333.40px;top:266.02px;font-size:12.9px;line-height:17px;color:#212529;-webkit-text-stroke:0.2px #212529;">Demontering</div>
<div class="t " style="left:530.50px;top:266.02px;font-size:12.9px;line-height:17px;color:#212529;-webkit-text-stroke:0.2px #212529;">Rumstermostat, Infälld/Utanpåliggande</div>
<div class="t " style="left:824.00px;top:266.80px;font-size:12.1px;line-height:16px;color:#212529;-webkit-text-stroke:0.2px #212529;">Generell-UE</div>
<div class="t " style="left:1071.00px;top:266.77px;font-size:12.2px;line-height:16px;color:#212529;-webkit-text-stroke:0.2px #212529;">El</div>
<div class="t " style="right:661.30px;text-align:right;top:266.73px;font-size:12.3px;line-height:16px;color:#212529;-webkit-text-stroke:0.2px #212529;">1,00 st</div>
<div class="t " style="right:529.70px;text-align:right;top:266.66px;font-size:12.5px;line-height:16px;color:#212529;-webkit-text-stroke:0.2px #212529;">0,25 mWu</div>
<div class="r" style="left:297px;top:289px;width:1683px;height:30px;background:#daf3e4;"></div>
<div class="r" style="left:297px;top:319px;width:1683px;height:1px;background:#c9cbcd;"></div>
<div class="r" style="left:311px;top:297px;width:14px;height:14px;box-sizing:border-box;border:1.5px solid #6a6f6c;border-radius:2px;"></div>
<div class="t " style="left:333.40px;top:297.02px;font-size:12.9px;line-height:17px;color:#212529;-webkit-text-stroke:0.2px #212529;">Demontering</div>
<div class="t " style="left:530.50px;top:297.02px;font-size:12.9px;line-height:17px;color:#212529;-webkit-text-stroke:0.2px #212529;">Strömställare/-brytare, 3-poliga, 4-6 mm²</div>
<div class="t " style="left:824.00px;top:297.80px;font-size:12.1px;line-height:16px;color:#212529;-webkit-text-stroke:0.2px #212529;">Generell-UE</div>
<div class="t " style="left:1071.00px;top:297.77px;font-size:12.2px;line-height:16px;color:#212529;-webkit-text-stroke:0.2px #212529;">El</div>
<div class="t " style="right:661.30px;text-align:right;top:297.73px;font-size:12.3px;line-height:16px;color:#212529;-webkit-text-stroke:0.2px #212529;">1,00 st</div>
<div class="t " style="right:529.70px;text-align:right;top:297.66px;font-size:12.5px;line-height:16px;color:#212529;-webkit-text-stroke:0.2px #212529;">0,73 mWu</div>
<div class="r" style="left:297px;top:320px;width:1683px;height:30px;background:#daf3e4;"></div>
<div class="r" style="left:297px;top:350px;width:1683px;height:1px;background:#c9cbcd;"></div>
<div class="r" style="left:311px;top:328px;width:14px;height:14px;box-sizing:border-box;border:1.5px solid #6a6f6c;border-radius:2px;"></div>
<div class="t " style="left:333.40px;top:328.02px;font-size:12.9px;line-height:17px;color:#212529;-webkit-text-stroke:0.2px #212529;">Demontering</div>
<div class="t " style="left:530.50px;top:328.02px;font-size:12.9px;line-height:17px;color:#212529;-webkit-text-stroke:0.2px #212529;">Vägguttag, 4-6 inkopplingar, Infällt</div>
<div class="t " style="left:824.00px;top:328.80px;font-size:12.1px;line-height:16px;color:#212529;-webkit-text-stroke:0.2px #212529;">Generell-UE</div>
<div class="t " style="left:1071.00px;top:328.77px;font-size:12.2px;line-height:16px;color:#212529;-webkit-text-stroke:0.2px #212529;">El</div>
<div class="t " style="right:661.30px;text-align:right;top:328.73px;font-size:12.3px;line-height:16px;color:#212529;-webkit-text-stroke:0.2px #212529;">7,00 st</div>
<div class="t " style="right:529.70px;text-align:right;top:328.66px;font-size:12.5px;line-height:16px;color:#212529;-webkit-text-stroke:0.2px #212529;">0,63 mWu</div>
<div class="r" style="left:297px;top:351px;width:1683px;height:30px;background:#daf3e4;"></div>
<div class="r" style="left:297px;top:381px;width:1683px;height:1px;background:#c9cbcd;"></div>
<div class="r" style="left:311px;top:359px;width:14px;height:14px;box-sizing:border-box;border:1.5px solid #6a6f6c;border-radius:2px;"></div>
<div class="t " style="left:333.40px;top:359.02px;font-size:12.9px;line-height:17px;color:#212529;-webkit-text-stroke:0.2px #212529;">Demontering</div>
<div class="t " style="left:530.50px;top:359.02px;font-size:12.9px;line-height:17px;color:#212529;-webkit-text-stroke:0.2px #212529;">Uttag, CEE, ≤2,5 mm²</div>
<div class="t " style="left:824.00px;top:359.80px;font-size:12.1px;line-height:16px;color:#212529;-webkit-text-stroke:0.2px #212529;">Generell-UE</div>
<div class="t " style="left:1071.00px;top:359.77px;font-size:12.2px;line-height:16px;color:#212529;-webkit-text-stroke:0.2px #212529;">El</div>
<div class="t " style="right:661.30px;text-align:right;top:359.73px;font-size:12.3px;line-height:16px;color:#212529;-webkit-text-stroke:0.2px #212529;">2,00 st</div>
<div class="t " style="right:529.70px;text-align:right;top:359.66px;font-size:12.5px;line-height:16px;color:#212529;-webkit-text-stroke:0.2px #212529;">0,58 mWu</div>
<div class="r" style="left:297px;top:382px;width:1683px;height:30px;background:#daf3e4;"></div>
<div class="r" style="left:297px;top:412px;width:1683px;height:1px;background:#c9cbcd;"></div>
<div class="r" style="left:311px;top:390px;width:14px;height:14px;box-sizing:border-box;border:1.5px solid #6a6f6c;border-radius:2px;"></div>
<div class="t " style="left:333.40px;top:390.02px;font-size:12.9px;line-height:17px;color:#212529;-webkit-text-stroke:0.2px #212529;">Demontering</div>
<div class="t " style="left:530.50px;top:390.02px;font-size:12.9px;line-height:17px;color:#212529;-webkit-text-stroke:0.2px #212529;">Installationskabel, ≤2,5 mm², Utanpåliggande</div>
<div class="t " style="left:824.00px;top:390.80px;font-size:12.1px;line-height:16px;color:#212529;-webkit-text-stroke:0.2px #212529;">Generell-UE</div>
<div class="t " style="left:1071.00px;top:390.77px;font-size:12.2px;line-height:16px;color:#212529;-webkit-text-stroke:0.2px #212529;">El</div>
<div class="t " style="right:661.30px;text-align:right;top:390.73px;font-size:12.3px;line-height:16px;color:#212529;-webkit-text-stroke:0.2px #212529;">16,00 lpm</div>
<div class="t " style="right:529.70px;text-align:right;top:390.66px;font-size:12.5px;line-height:16px;color:#212529;-webkit-text-stroke:0.2px #212529;">1,12 mWu</div>
<div class="r" style="left:297px;top:413px;width:1683px;height:30px;background:#f7f7f6;"></div>
<div class="r" style="left:297px;top:443px;width:1683px;height:1px;background:#c9cbcd;"></div>
<div class="r" style="left:311px;top:421px;width:14px;height:14px;box-sizing:border-box;border:1.5px solid #6a6f6c;border-radius:2px;"></div>
<div class="t " style="left:333.40px;top:419.50px;font-size:14.4px;line-height:19px;color:#212529;font-weight:700;">AML - säkerhetsåtgärder</div>
<div class="r" style="left:297px;top:444px;width:1683px;height:30px;background:#daf3e4;"></div>
<div class="r" style="left:297px;top:474px;width:1683px;height:1px;background:#c9cbcd;"></div>
<div class="r" style="left:311px;top:452px;width:14px;height:14px;box-sizing:border-box;border:1.5px solid #6a6f6c;border-radius:2px;"></div>
<div class="t " style="left:333.40px;top:452.02px;font-size:12.9px;line-height:17px;color:#212529;-webkit-text-stroke:0.2px #212529;">Urkoppling</div>
<div class="t " style="left:530.50px;top:452.02px;font-size:12.9px;line-height:17px;color:#212529;-webkit-text-stroke:0.2px #212529;">Enhet, 6-10 inkopplingar, ≤2,5 mm²</div>
<div class="t " style="left:824.00px;top:452.80px;font-size:12.1px;line-height:16px;color:#212529;-webkit-text-stroke:0.2px #212529;">Generell-UE</div>
<div class="t " style="left:1071.00px;top:452.77px;font-size:12.2px;line-height:16px;color:#212529;-webkit-text-stroke:0.2px #212529;">El</div>
<div class="t " style="right:661.30px;text-align:right;top:452.73px;font-size:12.3px;line-height:16px;color:#212529;-webkit-text-stroke:0.2px #212529;">5,00 st</div>
<div class="t " style="right:529.70px;text-align:right;top:452.66px;font-size:12.5px;line-height:16px;color:#212529;-webkit-text-stroke:0.2px #212529;">0,70 mWu</div>
<div class="r" style="left:297px;top:475px;width:1683px;height:30px;background:#daf3e4;"></div>
<div class="r" style="left:297px;top:505px;width:1683px;height:1px;background:#c9cbcd;"></div>
<div class="r" style="left:311px;top:483px;width:14px;height:14px;box-sizing:border-box;border:1.5px solid #6a6f6c;border-radius:2px;"></div>
<div class="t " style="left:333.40px;top:483.02px;font-size:12.9px;line-height:17px;color:#212529;-webkit-text-stroke:0.2px #212529;">Inkoppling</div>
<div class="t " style="left:530.50px;top:483.02px;font-size:12.9px;line-height:17px;color:#212529;-webkit-text-stroke:0.2px #212529;">Enhet, 6-10 inkopplingar, ≤2,5 mm²</div>
<div class="t " style="left:824.00px;top:483.80px;font-size:12.1px;line-height:16px;color:#212529;-webkit-text-stroke:0.2px #212529;">Generell-UE</div>
<div class="t " style="left:1071.00px;top:483.77px;font-size:12.2px;line-height:16px;color:#212529;-webkit-text-stroke:0.2px #212529;">El</div>
<div class="t " style="right:661.30px;text-align:right;top:483.73px;font-size:12.3px;line-height:16px;color:#212529;-webkit-text-stroke:0.2px #212529;">5,00 st</div>
<div class="t " style="right:529.70px;text-align:right;top:483.66px;font-size:12.5px;line-height:16px;color:#212529;-webkit-text-stroke:0.2px #212529;">1,85 mWu</div>
<div class="r" style="left:297px;top:506px;width:1683px;height:30px;background:#daf3e4;"></div>
<div class="r" style="left:297px;top:536px;width:1683px;height:1px;background:#c9cbcd;"></div>
<div class="r" style="left:311px;top:514px;width:14px;height:14px;box-sizing:border-box;border:1.5px solid #6a6f6c;border-radius:2px;"></div>
<div class="t " style="left:333.40px;top:514.02px;font-size:12.9px;line-height:17px;color:#212529;-webkit-text-stroke:0.2px #212529;">Demontering</div>
<div class="t " style="left:530.50px;top:514.02px;font-size:12.9px;line-height:17px;color:#212529;-webkit-text-stroke:0.2px #212529;">Kopplingsklämma</div>
<div class="t " style="left:824.00px;top:514.80px;font-size:12.1px;line-height:16px;color:#212529;-webkit-text-stroke:0.2px #212529;">Generell-UE</div>
<div class="t " style="left:1071.00px;top:514.77px;font-size:12.2px;line-height:16px;color:#212529;-webkit-text-stroke:0.2px #212529;">El</div>
<div class="t " style="right:661.30px;text-align:right;top:514.73px;font-size:12.3px;line-height:16px;color:#212529;-webkit-text-stroke:0.2px #212529;">16,00 st</div>
<div class="t " style="right:529.70px;text-align:right;top:514.66px;font-size:12.5px;line-height:16px;color:#212529;-webkit-text-stroke:0.2px #212529;">0,16 mWu</div>
<div class="r" style="left:297px;top:537px;width:1683px;height:30px;background:#daf3e4;"></div>
<div class="r" style="left:297px;top:567px;width:1683px;height:1px;background:#c9cbcd;"></div>
<div class="r" style="left:311px;top:545px;width:14px;height:14px;box-sizing:border-box;border:1.5px solid #6a6f6c;border-radius:2px;"></div>
<div class="t " style="left:333.40px;top:545.02px;font-size:12.9px;line-height:17px;color:#212529;-webkit-text-stroke:0.2px #212529;">Återmontering</div>
<div class="t " style="left:530.50px;top:545.02px;font-size:12.9px;line-height:17px;color:#212529;-webkit-text-stroke:0.2px #212529;">Kopplingsklämma</div>
<div class="t " style="left:824.00px;top:545.80px;font-size:12.1px;line-height:16px;color:#212529;-webkit-text-stroke:0.2px #212529;">Generell-UE</div>
<div class="t " style="left:1071.00px;top:545.77px;font-size:12.2px;line-height:16px;color:#212529;-webkit-text-stroke:0.2px #212529;">El</div>
<div class="t " style="right:661.30px;text-align:right;top:545.73px;font-size:12.3px;line-height:16px;color:#212529;-webkit-text-stroke:0.2px #212529;">16,00 st</div>
<div class="t " style="right:529.70px;text-align:right;top:545.66px;font-size:12.5px;line-height:16px;color:#212529;-webkit-text-stroke:0.2px #212529;">0,16 mWu</div>
<div class="r" style="left:297px;top:568px;width:1683px;height:30px;background:#daf3e4;"></div>
<div class="r" style="left:297px;top:598px;width:1683px;height:1px;background:#c9cbcd;"></div>
<div class="r" style="left:311px;top:576px;width:14px;height:14px;box-sizing:border-box;border:1.5px solid #6a6f6c;border-radius:2px;"></div>
<div class="t " style="left:333.40px;top:576.02px;font-size:12.9px;line-height:17px;color:#212529;-webkit-text-stroke:0.2px #212529;">Demontering</div>
<div class="t " style="left:530.50px;top:576.02px;font-size:12.9px;line-height:17px;color:#212529;-webkit-text-stroke:0.2px #212529;">Doslock</div>
<div class="t " style="left:824.00px;top:576.80px;font-size:12.1px;line-height:16px;color:#212529;-webkit-text-stroke:0.2px #212529;">Generell-UE</div>
<div class="t " style="left:1071.00px;top:576.77px;font-size:12.2px;line-height:16px;color:#212529;-webkit-text-stroke:0.2px #212529;">El</div>
<div class="t " style="right:661.30px;text-align:right;top:576.73px;font-size:12.3px;line-height:16px;color:#212529;-webkit-text-stroke:0.2px #212529;">1,00 st</div>
<div class="t " style="right:529.70px;text-align:right;top:576.66px;font-size:12.5px;line-height:16px;color:#212529;-webkit-text-stroke:0.2px #212529;">0,04 mWu</div>
<div class="r" style="left:297px;top:599px;width:1683px;height:30px;background:#daf3e4;"></div>
<div class="r" style="left:297px;top:629px;width:1683px;height:1px;background:#c9cbcd;"></div>
<div class="r" style="left:311px;top:607px;width:14px;height:14px;box-sizing:border-box;border:1.5px solid #6a6f6c;border-radius:2px;"></div>
<div class="t " style="left:333.40px;top:607.02px;font-size:12.9px;line-height:17px;color:#212529;-webkit-text-stroke:0.2px #212529;">Återmontering</div>
<div class="t " style="left:530.50px;top:607.02px;font-size:12.9px;line-height:17px;color:#212529;-webkit-text-stroke:0.2px #212529;">Doslock</div>
<div class="t " style="left:824.00px;top:607.80px;font-size:12.1px;line-height:16px;color:#212529;-webkit-text-stroke:0.2px #212529;">Generell-UE</div>
<div class="t " style="left:1071.00px;top:607.77px;font-size:12.2px;line-height:16px;color:#212529;-webkit-text-stroke:0.2px #212529;">El</div>
<div class="t " style="right:661.30px;text-align:right;top:607.73px;font-size:12.3px;line-height:16px;color:#212529;-webkit-text-stroke:0.2px #212529;">1,00 st</div>
<div class="t " style="right:529.70px;text-align:right;top:607.66px;font-size:12.5px;line-height:16px;color:#212529;-webkit-text-stroke:0.2px #212529;">0,06 mWu</div>
<div class="r" style="left:297px;top:630px;width:1683px;height:30px;background:#f7f7f6;"></div>
<div class="r" style="left:297px;top:660px;width:1683px;height:1px;background:#c9cbcd;"></div>
<div class="r" style="left:311px;top:638px;width:14px;height:14px;box-sizing:border-box;border:1.5px solid #6a6f6c;border-radius:2px;"></div>
<div class="t " style="left:333.40px;top:636.50px;font-size:14.4px;line-height:19px;color:#212529;font-weight:700;">Återmontering</div>
<div class="r" style="left:297px;top:661px;width:1683px;height:30px;background:#daf3e4;"></div>
<div class="r" style="left:297px;top:691px;width:1683px;height:1px;background:#c9cbcd;"></div>
<div class="r" style="left:311px;top:669px;width:14px;height:14px;box-sizing:border-box;border:1.5px solid #6a6f6c;border-radius:2px;"></div>
<div class="t " style="left:333.40px;top:669.02px;font-size:12.9px;line-height:17px;color:#212529;-webkit-text-stroke:0.2px #212529;">Återmontering</div>
<div class="t " style="left:530.50px;top:669.02px;font-size:12.9px;line-height:17px;color:#212529;-webkit-text-stroke:0.2px #212529;">Strömställare, 4-6 inkopplingar, Infälld</div>
<div class="t " style="left:824.00px;top:669.80px;font-size:12.1px;line-height:16px;color:#212529;-webkit-text-stroke:0.2px #212529;">Generell-UE</div>
<div class="t " style="left:1071.00px;top:669.77px;font-size:12.2px;line-height:16px;color:#212529;-webkit-text-stroke:0.2px #212529;">El</div>
<div class="t " style="right:661.30px;text-align:right;top:669.73px;font-size:12.3px;line-height:16px;color:#212529;-webkit-text-stroke:0.2px #212529;">2,00 st</div>
<div class="t " style="right:529.70px;text-align:right;top:669.66px;font-size:12.5px;line-height:16px;color:#212529;-webkit-text-stroke:0.2px #212529;">0,34 mWu</div>
<div class="r" style="left:297px;top:692px;width:1683px;height:30px;background:#daf3e4;"></div>
<div class="r" style="left:297px;top:722px;width:1683px;height:1px;background:#c9cbcd;"></div>
<div class="r" style="left:311px;top:700px;width:14px;height:14px;box-sizing:border-box;border:1.5px solid #6a6f6c;border-radius:2px;"></div>
<div class="t " style="left:333.40px;top:700.02px;font-size:12.9px;line-height:17px;color:#212529;-webkit-text-stroke:0.2px #212529;">Återmontering</div>
<div class="t " style="left:530.50px;top:700.02px;font-size:12.9px;line-height:17px;color:#212529;-webkit-text-stroke:0.2px #212529;">Rumstermostat, Infälld/Utanpåliggande</div>
<div class="t " style="left:824.00px;top:700.80px;font-size:12.1px;line-height:16px;color:#212529;-webkit-text-stroke:0.2px #212529;">Generell-UE</div>
<div class="t " style="left:1071.00px;top:700.77px;font-size:12.2px;line-height:16px;color:#212529;-webkit-text-stroke:0.2px #212529;">El</div>
<div class="t " style="right:661.30px;text-align:right;top:700.73px;font-size:12.3px;line-height:16px;color:#212529;-webkit-text-stroke:0.2px #212529;">1,00 st</div>
<div class="t " style="right:529.70px;text-align:right;top:700.66px;font-size:12.5px;line-height:16px;color:#212529;-webkit-text-stroke:0.2px #212529;">0,44 mWu</div>
<div class="r" style="left:297px;top:723px;width:1683px;height:30px;background:#daf3e4;"></div>
<div class="r" style="left:297px;top:753px;width:1683px;height:1px;background:#c9cbcd;"></div>
<div class="r" style="left:311px;top:731px;width:14px;height:14px;box-sizing:border-box;border:1.5px solid #6a6f6c;border-radius:2px;"></div>
<div class="t " style="left:333.40px;top:731.02px;font-size:12.9px;line-height:17px;color:#212529;-webkit-text-stroke:0.2px #212529;">Återmontering</div>
<div class="t " style="left:530.50px;top:731.02px;font-size:12.9px;line-height:17px;color:#212529;-webkit-text-stroke:0.2px #212529;">Strömställare/-brytare, 3-poliga, 4-6 mm²</div>
<div class="t " style="left:824.00px;top:731.80px;font-size:12.1px;line-height:16px;color:#212529;-webkit-text-stroke:0.2px #212529;">Generell-UE</div>
<div class="t " style="left:1071.00px;top:731.77px;font-size:12.2px;line-height:16px;color:#212529;-webkit-text-stroke:0.2px #212529;">El</div>
<div class="t " style="right:661.30px;text-align:right;top:731.73px;font-size:12.3px;line-height:16px;color:#212529;-webkit-text-stroke:0.2px #212529;">1,00 st</div>
<div class="t " style="right:529.70px;text-align:right;top:731.66px;font-size:12.5px;line-height:16px;color:#212529;-webkit-text-stroke:0.2px #212529;">1,09 mWu</div>
<div class="r" style="left:297px;top:754px;width:1683px;height:30px;background:#daf3e4;"></div>
<div class="r" style="left:297px;top:784px;width:1683px;height:1px;background:#c9cbcd;"></div>
<div class="r" style="left:311px;top:762px;width:14px;height:14px;box-sizing:border-box;border:1.5px solid #6a6f6c;border-radius:2px;"></div>
<div class="t " style="left:333.40px;top:762.02px;font-size:12.9px;line-height:17px;color:#212529;-webkit-text-stroke:0.2px #212529;">Återmontering</div>
<div class="t " style="left:530.50px;top:762.02px;font-size:12.9px;line-height:17px;color:#212529;-webkit-text-stroke:0.2px #212529;">Vägguttag, 4-6 inkopplingar, Infällt</div>
<div class="t " style="left:824.00px;top:762.80px;font-size:12.1px;line-height:16px;color:#212529;-webkit-text-stroke:0.2px #212529;">Generell-UE</div>
<div class="t " style="left:1071.00px;top:762.77px;font-size:12.2px;line-height:16px;color:#212529;-webkit-text-stroke:0.2px #212529;">El</div>
<div class="t " style="right:661.30px;text-align:right;top:762.73px;font-size:12.3px;line-height:16px;color:#212529;-webkit-text-stroke:0.2px #212529;">7,00 st</div>
<div class="t " style="right:529.70px;text-align:right;top:762.66px;font-size:12.5px;line-height:16px;color:#212529;-webkit-text-stroke:0.2px #212529;">0,98 mWu</div>
<div class="r" style="left:297px;top:785px;width:1683px;height:30px;background:#daf3e4;"></div>
<div class="r" style="left:297px;top:815px;width:1683px;height:1px;background:#c9cbcd;"></div>
<div class="r" style="left:311px;top:793px;width:14px;height:14px;box-sizing:border-box;border:1.5px solid #6a6f6c;border-radius:2px;"></div>
<div class="t " style="left:333.40px;top:793.02px;font-size:12.9px;line-height:17px;color:#212529;-webkit-text-stroke:0.2px #212529;">Återmontering</div>
<div class="t " style="left:530.50px;top:793.02px;font-size:12.9px;line-height:17px;color:#212529;-webkit-text-stroke:0.2px #212529;">Uttag, CEE, ≤2,5 mm²</div>
<div class="t " style="left:824.00px;top:793.80px;font-size:12.1px;line-height:16px;color:#212529;-webkit-text-stroke:0.2px #212529;">Generell-UE</div>
<div class="t " style="left:1071.00px;top:793.77px;font-size:12.2px;line-height:16px;color:#212529;-webkit-text-stroke:0.2px #212529;">El</div>
<div class="t " style="right:661.30px;text-align:right;top:793.73px;font-size:12.3px;line-height:16px;color:#212529;-webkit-text-stroke:0.2px #212529;">2,00 st</div>
<div class="t " style="right:529.70px;text-align:right;top:793.66px;font-size:12.5px;line-height:16px;color:#212529;-webkit-text-stroke:0.2px #212529;">0,86 mWu</div>
<div class="r" style="left:297px;top:816px;width:1683px;height:30px;background:#daf3e4;"></div>
<div class="r" style="left:297px;top:846px;width:1683px;height:1px;background:#c9cbcd;"></div>
<div class="r" style="left:311px;top:824px;width:14px;height:14px;box-sizing:border-box;border:1.5px solid #6a6f6c;border-radius:2px;"></div>
<div class="t " style="left:333.40px;top:824.02px;font-size:12.9px;line-height:17px;color:#212529;-webkit-text-stroke:0.2px #212529;">Återmontering på betong, tegel,…</div>
<div class="t " style="left:530.50px;top:824.02px;font-size:12.9px;line-height:17px;color:#212529;-webkit-text-stroke:0.2px #212529;">Installationskabel, ≤2,5 mm², Utanpåliggande</div>
<div class="t " style="left:824.00px;top:824.80px;font-size:12.1px;line-height:16px;color:#212529;-webkit-text-stroke:0.2px #212529;">Generell-UE</div>
<div class="t " style="left:1071.00px;top:824.77px;font-size:12.2px;line-height:16px;color:#212529;-webkit-text-stroke:0.2px #212529;">El</div>
<div class="t " style="right:661.30px;text-align:right;top:824.73px;font-size:12.3px;line-height:16px;color:#212529;-webkit-text-stroke:0.2px #212529;">16,00 lpm</div>
<div class="t " style="right:529.70px;text-align:right;top:824.66px;font-size:12.5px;line-height:16px;color:#212529;-webkit-text-stroke:0.2px #212529;">2,24 mWu</div>
<div class="r" style="left:297px;top:847px;width:1683px;height:30px;background:#daf3e4;"></div>
<div class="r" style="left:297px;top:877px;width:1683px;height:1px;background:#c9cbcd;"></div>
<div class="r" style="left:311px;top:855px;width:14px;height:14px;box-sizing:border-box;border:1.5px solid #6a6f6c;border-radius:2px;"></div>
<div class="t " style="left:333.40px;top:855.02px;font-size:12.9px;line-height:17px;color:#212529;-webkit-text-stroke:0.2px #212529;">Provning med instr</div>
<div class="t " style="left:530.50px;top:855.02px;font-size:12.9px;line-height:17px;color:#212529;-webkit-text-stroke:0.2px #212529;">Kontroll för idrifttagning</div>
<div class="t " style="left:824.00px;top:855.80px;font-size:12.1px;line-height:16px;color:#212529;-webkit-text-stroke:0.2px #212529;">Generell-UE</div>
<div class="t " style="left:1071.00px;top:855.77px;font-size:12.2px;line-height:16px;color:#212529;-webkit-text-stroke:0.2px #212529;">El</div>
<div class="t " style="right:661.30px;text-align:right;top:855.73px;font-size:12.3px;line-height:16px;color:#212529;-webkit-text-stroke:0.2px #212529;">1,00 st</div>
<div class="t " style="right:529.70px;text-align:right;top:855.66px;font-size:12.5px;line-height:16px;color:#212529;-webkit-text-stroke:0.2px #212529;">0,33 mWu</div>
<div class="r" style="left:297px;top:878px;width:1683px;height:30px;background:#f7f7f6;"></div>
<div class="r" style="left:297px;top:908px;width:1683px;height:1px;background:#c9cbcd;"></div>
<div class="r" style="left:311px;top:886px;width:14px;height:14px;box-sizing:border-box;border:1.5px solid #6a6f6c;border-radius:2px;"></div>
<div class="t " style="left:333.40px;top:884.50px;font-size:14.4px;line-height:19px;color:#212529;font-weight:700;">Poolfiltrering</div>
<div class="r" style="left:297px;top:909px;width:1683px;height:30px;background:#daf3e4;"></div>
<div class="r" style="left:297px;top:939px;width:1683px;height:1px;background:#c9cbcd;"></div>
<div class="r" style="left:311px;top:917px;width:14px;height:14px;box-sizing:border-box;border:1.5px solid #6a6f6c;border-radius:2px;"></div>
<div class="t " style="left:333.40px;top:917.02px;font-size:12.9px;line-height:17px;color:#212529;-webkit-text-stroke:0.2px #212529;">Demontering</div>
<div class="t " style="left:530.50px;top:917.02px;font-size:12.9px;line-height:17px;color:#212529;-webkit-text-stroke:0.2px #212529;">Styrkabel, 1,5 mm², ≤10 ledare, Utanpåliggande</div>
<div class="t " style="left:824.00px;top:917.80px;font-size:12.1px;line-height:16px;color:#212529;-webkit-text-stroke:0.2px #212529;">Generell-UE</div>
<div class="t " style="left:1071.00px;top:917.77px;font-size:12.2px;line-height:16px;color:#212529;-webkit-text-stroke:0.2px #212529;">El</div>
<div class="t " style="right:661.30px;text-align:right;top:917.73px;font-size:12.3px;line-height:16px;color:#212529;-webkit-text-stroke:0.2px #212529;">2,00 lpm</div>
<div class="t " style="right:529.70px;text-align:right;top:917.66px;font-size:12.5px;line-height:16px;color:#212529;-webkit-text-stroke:0.2px #212529;">0,14 mWu</div>
<div class="r" style="left:297px;top:940px;width:1683px;height:30px;background:#daf3e4;"></div>
<div class="r" style="left:297px;top:970px;width:1683px;height:1px;background:#c9cbcd;"></div>
<div class="r" style="left:311px;top:948px;width:14px;height:14px;box-sizing:border-box;border:1.5px solid #6a6f6c;border-radius:2px;"></div>
<div class="t " style="left:333.40px;top:948.02px;font-size:12.9px;line-height:17px;color:#212529;-webkit-text-stroke:0.2px #212529;">Återmontering på betong, tegel,…</div>
<div class="t " style="left:530.50px;top:948.02px;font-size:12.9px;line-height:17px;color:#212529;-webkit-text-stroke:0.2px #212529;">Styrkabel, 1,5 mm², ≤10 ledare, Utanpåliggande</div>
<div class="t " style="left:824.00px;top:948.80px;font-size:12.1px;line-height:16px;color:#212529;-webkit-text-stroke:0.2px #212529;">Generell-UE</div>
<div class="t " style="left:1071.00px;top:948.77px;font-size:12.2px;line-height:16px;color:#212529;-webkit-text-stroke:0.2px #212529;">El</div>
<div class="t " style="right:661.30px;text-align:right;top:948.73px;font-size:12.3px;line-height:16px;color:#212529;-webkit-text-stroke:0.2px #212529;">2,00 lpm</div>
<div class="t " style="right:529.70px;text-align:right;top:948.66px;font-size:12.5px;line-height:16px;color:#212529;-webkit-text-stroke:0.2px #212529;">0,28 mWu</div>
<div class="r" style="left:297px;top:971px;width:1683px;height:30px;background:#daf3e4;"></div>
<div class="r" style="left:297px;top:1001px;width:1683px;height:1px;background:#c9cbcd;"></div>
<div class="r" style="left:311px;top:979px;width:14px;height:14px;box-sizing:border-box;border:1.5px solid #6a6f6c;border-radius:2px;"></div>
<div class="t " style="left:333.40px;top:979.02px;font-size:12.9px;line-height:17px;color:#212529;-webkit-text-stroke:0.2px #212529;">Demontering</div>
<div class="t " style="left:530.50px;top:979.02px;font-size:12.9px;line-height:17px;color:#212529;-webkit-text-stroke:0.2px #212529;">Anslutningsdosa, Utanpåliggande</div>
<div class="t " style="left:824.00px;top:979.80px;font-size:12.1px;line-height:16px;color:#212529;-webkit-text-stroke:0.2px #212529;">Generell-UE</div>
<div class="t " style="left:1071.00px;top:979.77px;font-size:12.2px;line-height:16px;color:#212529;-webkit-text-stroke:0.2px #212529;">El</div>
<div class="t " style="right:661.30px;text-align:right;top:979.73px;font-size:12.3px;line-height:16px;color:#212529;-webkit-text-stroke:0.2px #212529;">2,00 st</div>
<div class="t " style="right:529.70px;text-align:right;top:979.66px;font-size:12.5px;line-height:16px;color:#212529;-webkit-text-stroke:0.2px #212529;">0,20 mWu</div>
<div class="r" style="left:297px;top:1002px;width:1683px;height:30px;background:#daf3e4;"></div>
<div class="r" style="left:297px;top:1032px;width:1683px;height:1px;background:#c9cbcd;"></div>
<div class="r" style="left:311px;top:1010px;width:14px;height:14px;box-sizing:border-box;border:1.5px solid #6a6f6c;border-radius:2px;"></div>
<div class="t " style="left:333.40px;top:1010.02px;font-size:12.9px;line-height:17px;color:#212529;-webkit-text-stroke:0.2px #212529;">Återmontering</div>
<div class="t " style="left:530.50px;top:1010.02px;font-size:12.9px;line-height:17px;color:#212529;-webkit-text-stroke:0.2px #212529;">Anslutningsdosa, Utanpåliggande</div>
<div class="t " style="left:824.00px;top:1010.80px;font-size:12.1px;line-height:16px;color:#212529;-webkit-text-stroke:0.2px #212529;">Generell-UE</div>
<div class="t " style="left:1071.00px;top:1010.77px;font-size:12.2px;line-height:16px;color:#212529;-webkit-text-stroke:0.2px #212529;">El</div>
<div class="t " style="right:661.30px;text-align:right;top:1010.73px;font-size:12.3px;line-height:16px;color:#212529;-webkit-text-stroke:0.2px #212529;">2,00 st</div>
<div class="t " style="right:529.70px;text-align:right;top:1010.66px;font-size:12.5px;line-height:16px;color:#212529;-webkit-text-stroke:0.2px #212529;">0,32 mWu</div>
<div class="r" style="left:297px;top:1033px;width:1683px;height:30px;background:#daf3e4;"></div>
<div class="r" style="left:297px;top:1063px;width:1683px;height:1px;background:#c9cbcd;"></div>
<div class="r" style="left:311px;top:1041px;width:14px;height:14px;box-sizing:border-box;border:1.5px solid #6a6f6c;border-radius:2px;"></div>
<div class="t " style="left:333.40px;top:1041.02px;font-size:12.9px;line-height:17px;color:#212529;-webkit-text-stroke:0.2px #212529;">Demontering</div>
<div class="t " style="left:530.50px;top:1041.02px;font-size:12.9px;line-height:17px;color:#212529;-webkit-text-stroke:0.2px #212529;">Gruppcentral, G II, ≤3 säkringar</div>
<div class="t " style="left:824.00px;top:1041.80px;font-size:12.1px;line-height:16px;color:#212529;-webkit-text-stroke:0.2px #212529;">Generell-UE</div>
<div class="t " style="left:1071.00px;top:1041.77px;font-size:12.2px;line-height:16px;color:#212529;-webkit-text-stroke:0.2px #212529;">El</div>
<div class="t " style="right:661.30px;text-align:right;top:1041.73px;font-size:12.3px;line-height:16px;color:#212529;-webkit-text-stroke:0.2px #212529;">1,00 st</div>
<div class="t " style="right:529.70px;text-align:right;top:1041.66px;font-size:12.5px;line-height:16px;color:#212529;-webkit-text-stroke:0.2px #212529;">0,65 mWu</div>
<div class="r" style="left:297px;top:1064px;width:1683px;height:30px;background:#daf3e4;"></div>
<div class="r" style="left:297px;top:1094px;width:1683px;height:1px;background:#c9cbcd;"></div>
<div class="r" style="left:311px;top:1072px;width:14px;height:14px;box-sizing:border-box;border:1.5px solid #6a6f6c;border-radius:2px;"></div>
<div class="t " style="left:333.40px;top:1072.02px;font-size:12.9px;line-height:17px;color:#212529;-webkit-text-stroke:0.2px #212529;">Återmontering</div>
<div class="t " style="left:530.50px;top:1072.02px;font-size:12.9px;line-height:17px;color:#212529;-webkit-text-stroke:0.2px #212529;">Gruppcentral, G II, ≤3 säkringar</div>
<div class="t " style="left:824.00px;top:1072.80px;font-size:12.1px;line-height:16px;color:#212529;-webkit-text-stroke:0.2px #212529;">Generell-UE</div>
<div class="t " style="left:1071.00px;top:1072.77px;font-size:12.2px;line-height:16px;color:#212529;-webkit-text-stroke:0.2px #212529;">El</div>
<div class="t " style="right:661.30px;text-align:right;top:1072.73px;font-size:12.3px;line-height:16px;color:#212529;-webkit-text-stroke:0.2px #212529;">1,00 st</div>
<div class="t " style="right:529.70px;text-align:right;top:1072.66px;font-size:12.5px;line-height:16px;color:#212529;-webkit-text-stroke:0.2px #212529;">0,95 mWu</div>
<div class="r" style="left:297px;top:1095px;width:1683px;height:30px;background:#f7f7f6;"></div>
<div class="r" style="left:297px;top:1125px;width:1683px;height:1px;background:#c9cbcd;"></div>
<div class="r" style="left:311px;top:1103px;width:14px;height:14px;box-sizing:border-box;border:1.5px solid #6a6f6c;border-radius:2px;"></div>
<div class="t " style="left:333.40px;top:1101.50px;font-size:14.4px;line-height:19px;color:#212529;font-weight:700;">Provisorisk kraft till enheter under byggtid</div>
<div class="r" style="left:297px;top:1126px;width:1683px;height:30px;background:#daf3e4;"></div>
<div class="r" style="left:297px;top:1156px;width:1683px;height:1px;background:#c9cbcd;"></div>
<div class="r" style="left:311px;top:1134px;width:14px;height:14px;box-sizing:border-box;border:1.5px solid #6a6f6c;border-radius:2px;"></div>
<div class="t " style="left:333.40px;top:1134.02px;font-size:12.9px;line-height:17px;color:#212529;-webkit-text-stroke:0.2px #212529;">Nymontering på trä</div>
<div class="t " style="left:530.50px;top:1134.02px;font-size:12.9px;line-height:17px;color:#212529;-webkit-text-stroke:0.2px #212529;">Kraftkabel, ≤2,5 mm², Utanpåliggande</div>
<div class="t " style="left:824.00px;top:1134.80px;font-size:12.1px;line-height:16px;color:#212529;-webkit-text-stroke:0.2px #212529;">Generell-UE</div>
<div class="t " style="left:1071.00px;top:1134.77px;font-size:12.2px;line-height:16px;color:#212529;-webkit-text-stroke:0.2px #212529;">El</div>
<div class="t " style="right:661.30px;text-align:right;top:1134.73px;font-size:12.3px;line-height:16px;color:#212529;-webkit-text-stroke:0.2px #212529;">15,00 lpm</div>
<div class="t " style="right:529.70px;text-align:right;top:1134.66px;font-size:12.5px;line-height:16px;color:#212529;-webkit-text-stroke:0.2px #212529;">1,80 mWu</div>
<div class="r" style="left:297px;top:1157px;width:1683px;height:30px;background:#daf3e4;"></div>
<div class="r" style="left:297px;top:1187px;width:1683px;height:1px;background:#c9cbcd;"></div>
<div class="r" style="left:311px;top:1165px;width:14px;height:14px;box-sizing:border-box;border:1.5px solid #6a6f6c;border-radius:2px;"></div>
<div class="t " style="left:333.40px;top:1165.02px;font-size:12.9px;line-height:17px;color:#212529;-webkit-text-stroke:0.2px #212529;">Demontering</div>
<div class="t " style="left:530.50px;top:1165.02px;font-size:12.9px;line-height:17px;color:#212529;-webkit-text-stroke:0.2px #212529;">Kraftkabel, ≤2,5 mm², Utanpåliggande</div>
<div class="t " style="left:824.00px;top:1165.80px;font-size:12.1px;line-height:16px;color:#212529;-webkit-text-stroke:0.2px #212529;">Generell-UE</div>
<div class="t " style="left:1071.00px;top:1165.77px;font-size:12.2px;line-height:16px;color:#212529;-webkit-text-stroke:0.2px #212529;">El</div>
<div class="t " style="right:661.30px;text-align:right;top:1165.73px;font-size:12.3px;line-height:16px;color:#212529;-webkit-text-stroke:0.2px #212529;">15,00 lpm</div>
<div class="t " style="right:529.70px;text-align:right;top:1165.66px;font-size:12.5px;line-height:16px;color:#212529;-webkit-text-stroke:0.2px #212529;">1,05 mWu</div>
</body></html>
